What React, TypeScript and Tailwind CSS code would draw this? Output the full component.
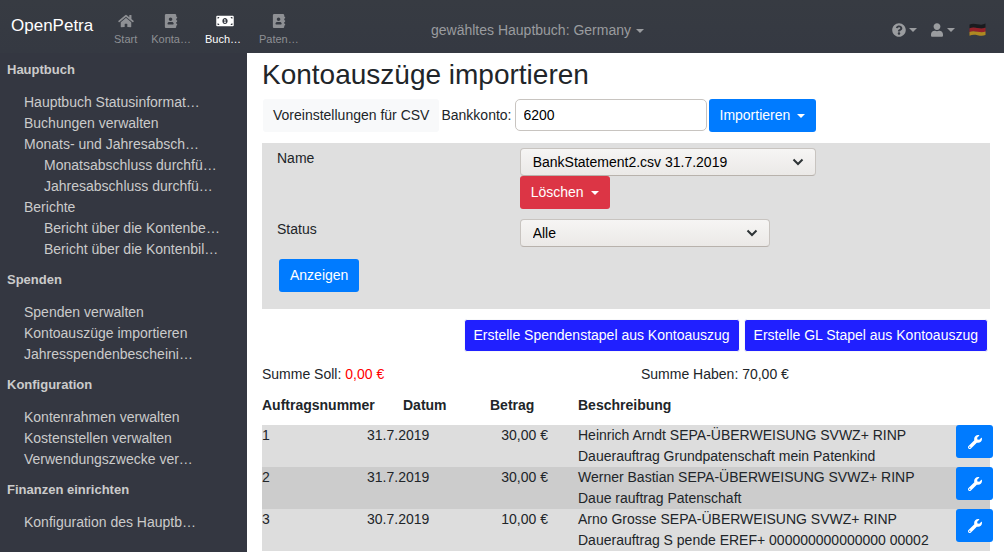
import type { ReactNode } from "react";
import {
  FaAddressBook,
  FaHome,
  FaMoneyBillAlt,
  FaQuestionCircle,
  FaUser,
  FaWrench,
} from "react-icons/fa";

type MenuItem = { label: string; nested?: boolean };
type MenuSection = { title: string; items: MenuItem[] };

const menu: MenuSection[] = [
  {
    title: "Hauptbuch",
    items: [
      { label: "Hauptbuch Statusinformat…" },
      { label: "Buchungen verwalten" },
      { label: "Monats- und Jahresabsch…" },
      { label: "Monatsabschluss durchfü…", nested: true },
      { label: "Jahresabschluss durchfü…", nested: true },
      { label: "Berichte" },
      { label: "Bericht über die Kontenbe…", nested: true },
      { label: "Bericht über die Kontenbil…", nested: true },
    ],
  },
  {
    title: "Spenden",
    items: [
      { label: "Spenden verwalten" },
      { label: "Kontoauszüge importieren" },
      { label: "Jahresspendenbescheini…" },
    ],
  },
  {
    title: "Konfiguration",
    items: [
      { label: "Kontenrahmen verwalten" },
      { label: "Kostenstellen verwalten" },
      { label: "Verwendungszwecke ver…" },
    ],
  },
  {
    title: "Finanzen einrichten",
    items: [{ label: "Konfiguration des Hauptb…" }],
  },
];

const transactions = [
  {
    id: 1,
    date: "31.7.2019",
    amount: "30,00 €",
    lines: ["Heinrich Arndt SEPA-ÜBERWEISUNG SVWZ+ RINP", "Dauerauftrag Grundpatenschaft mein Patenkind"],
  },
  {
    id: 2,
    date: "31.7.2019",
    amount: "30,00 €",
    lines: ["Werner Bastian SEPA-ÜBERWEISUNG SVWZ+ RINP", "Daue rauftrag Patenschaft"],
  },
  {
    id: 3,
    date: "30.7.2019",
    amount: "10,00 €",
    lines: ["Arno Grosse SEPA-ÜBERWEISUNG SVWZ+ RINP", "Dauerauftrag S pende EREF+ 000000000000000 00002"],
  },
];

function Caret() {
  return (
    <svg viewBox="0 0 8 4" className="h-1 w-2 shrink-0" fill="currentColor" aria-hidden="true">
      <path d="M0 0h8L4 4z" />
    </svg>
  );
}

function GermanFlag() {
  return (
    <svg viewBox="0 0 17 13" className="h-[13px] w-[17px] opacity-65" aria-hidden="true">
      <path d="M.5 1.6C3 .4 5 .4 8.500 1.200S14 1.800 16.500.6V5C14 6.100 12 6 8.500 5.200S3 4.600.5 5.600z" fill="#0c0c0c" />
      <path d="M.5 5.200C3 4.100 5 4.200 8.500 5S14 5.600 16.500 4.600V8.800C14 9.800 12 9.700 8.500 8.900S3 8.400.5 9.300z" fill="#c8141c" />
      <path d="M.5 9C3 7.900 5 8 8.500 8.700S14 9.400 16.500 8.400V12C14 13 12 12.900 8.500 12.200S3 11.800.5 12.700z" fill="#f0b410" />
    </svg>
  );
}

function NavItem({ label, active, wide, children }: { label: string; active?: boolean; wide?: boolean; children: ReactNode }) {
  return (
    <a
      href="#"
      className={`flex flex-col gap-[3px] text-[11px] leading-4 ${active ? "text-white" : "text-[#8e9094]"} ${wide ? "w-10" : ""}`}
    >
      <span className="flex justify-center">{children}</span>
      <span>{label}</span>
    </a>
  );
}

function Select({ id, value, className }: { id: string; value: string; className: string }) {
  return (
    <div className={`relative ${className}`}>
      <select
        id={id}
        className="block h-7 w-full appearance-none rounded-[4px] border border-[#c8c4c0] border-b-[#b8b2ac] bg-linear-to-b from-[#f6f5f4] to-[#ebe9e7] pl-3 pr-8 text-sm text-black"
      >
        <option>{value}</option>
      </select>
      <svg
        viewBox="0 0 12 8"
        className="pointer-events-none absolute right-3 top-2.5 h-2 w-3"
        fill="none"
        stroke="#2e3436"
        strokeWidth="2"
        aria-hidden="true"
      >
        <path d="M1.500 1.500L6 6l4.500-4.500" />
      </svg>
    </div>
  );
}

const button = "inline-flex h-[33px] items-center justify-center whitespace-nowrap rounded-[3px]";

export default function App() {
  return (
    <div className="flex min-h-screen flex-col bg-white font-['Liberation_Sans',Arial,sans-serif] text-sm leading-[21px] text-[#212529]">
      <header className="flex h-[53px] items-center bg-linear-to-b from-[#373b42] to-[#353942] pl-[11px] pr-[18px] text-[#9a9c9f]">
        <a href="#" className="w-[103px] pb-0.5 text-[17px] text-white">
          OpenPetra
        </a>
        <nav className="flex w-[317px] gap-3.5 pt-2">
          <NavItem label="Start">
            <FaHome className="h-3.5 w-4" />
          </NavItem>
          <NavItem label="Konta…">
            <FaAddressBook className="h-3.5 w-3.5" />
          </NavItem>
          <NavItem label="Buch…" active wide>
            <FaMoneyBillAlt className="h-3.5 w-[18px]" />
          </NavItem>
          <NavItem label="Paten…">
            <FaAddressBook className="h-3.5 w-3.5" />
          </NavItem>
        </nav>
        <button type="button" className="flex items-center gap-[5px] pt-2">
          gewähltes Hauptbuch: Germany <Caret />
        </button>
        <div className="ml-auto flex items-center gap-3.5 pt-1.5">
          <button type="button" aria-label="Hilfe" className="flex items-center gap-[3px]">
            <FaQuestionCircle className="h-3.5 w-3.5" />
            <Caret />
          </button>
          <button type="button" aria-label="Benutzer" className="flex items-center gap-1">
            <FaUser className="h-3.5 w-3" />
            <Caret />
          </button>
          <button type="button" aria-label="Deutsch">
            <GermanFlag />
          </button>
        </div>
      </header>

      <div className="flex grow">
        <aside className="flex w-[247px] shrink-0 flex-col gap-2.5 bg-[#343741] pt-[7px] text-[#cbcbcb]">
          {menu.map((section) => (
            <section key={section.title}>
              <h2 className="mb-3 pl-[7px] text-[13px] font-bold leading-5">{section.title}</h2>
              <ul>
                {section.items.map((item) => (
                  <li key={item.label} className={item.nested ? "pl-11" : "pl-6"}>
                    <a href="#">{item.label}</a>
                  </li>
                ))}
              </ul>
            </section>
          ))}
        </aside>

        <main className="min-w-0 grow pl-[15px] pr-3.5 pt-1">
          <h1 className="text-[28px] leading-9">Kontoauszüge importieren</h1>

          <div className="mt-1.5 flex items-start">
            <button type="button" className={`${button} ml-px bg-[#f8f9fa] px-2.5`}>
              Voreinstellungen für CSV
            </button>
            <label htmlFor="account" className="ml-0.5 mr-[3px] leading-[33px]">
              Bankkonto:
            </label>
            <input
              id="account"
              type="text"
              defaultValue="6200"
              className="h-8 w-48 rounded-[5px] border border-[#c8c4c0] bg-white px-2 text-black"
            />
            <button type="button" className={`${button} ml-0.5 gap-[7px] bg-[#007bff] px-[11px] text-white`}>
              Importieren <Caret />
            </button>
          </div>

          <form className="mt-[11px] bg-[#dfdfdf] pb-[17px] pt-[5px]">
            <div className="grid grid-cols-3">
              <label htmlFor="file" className="pl-[15px]">
                Name
              </label>
              <div className="col-span-2 pl-[15px]">
                <Select id="file" value="BankStatement2.csv 31.7.2019" className="w-[296px]" />
                <button type="button" className={`${button} gap-[7px] bg-[#dc3545] px-[11px] text-white`}>
                  Löschen <Caret />
                </button>
              </div>
            </div>
            <div className="mt-2.5 grid grid-cols-3">
              <label htmlFor="status" className="pl-[15px]">
                Status
              </label>
              <div className="col-span-2 pl-[15px]">
                <Select id="status" value="Alle" className="w-[250px]" />
              </div>
            </div>
            <button type="button" className={`${button} ml-[17px] mt-3 bg-[#007bff] px-[11px] text-white`}>
              Anzeigen
            </button>
          </form>

          <div className="mt-2.5 flex justify-end gap-1 pr-0.5">
            <button type="button" className={`${button} border border-[#f8f9fa] bg-[#2020ff] px-[9px] text-white`}>
              Erstelle Spendenstapel aus Kontoauszug
            </button>
            <button type="button" className={`${button} border border-[#f8f9fa] bg-[#2020ff] px-[9px] text-white`}>
              Erstelle GL Stapel aus Kontoauszug
            </button>
          </div>

          <div className="mt-3 grid grid-cols-2">
            <p>
              Summe Soll: <span className="text-[#ff0000]">0,00 €</span>
            </p>
            <p className="pl-[15px]">Summe Haben: 70,00 €</p>
          </div>

          <table className="mt-2.5 w-full table-fixed border-collapse">
            <colgroup>
              <col className="w-[105px]" />
              <col className="w-[94px]" />
              <col className="w-[87px]" />
              <col />
              <col className="w-[34px]" />
            </colgroup>
            <thead>
              <tr className="h-[30px] whitespace-nowrap text-left align-top">
                <th>Auftragsnummer</th>
                <th className="pl-9">Datum</th>
                <th className="pl-[29px]">Betrag</th>
                <th className="pl-[30px]">Beschreibung</th>
                <td />
              </tr>
            </thead>
            <tbody>
              {transactions.map((t) => (
                <tr key={t.id} className="align-top odd:bg-[#dddddd] even:bg-[#cccccc]">
                  <td>{t.id}</td>
                  <td>{t.date}</td>
                  <td className="text-right">{t.amount}</td>
                  <td className="pl-[30px]">
                    {t.lines.map((line) => (
                      <div key={line}>{line}</div>
                    ))}
                  </td>
                  <td>
                    <button
                      type="button"
                      aria-label="Bearbeiten"
                      className="flex h-[33px] w-[37px] items-center justify-center rounded-[3px] bg-[#007bff] text-white"
                    >
                      <FaWrench className="h-3.5 w-3.5" />
                    </button>
                  </td>
                </tr>
              ))}
            </tbody>
          </table>
        </main>
      </div>
    </div>
  );
}
